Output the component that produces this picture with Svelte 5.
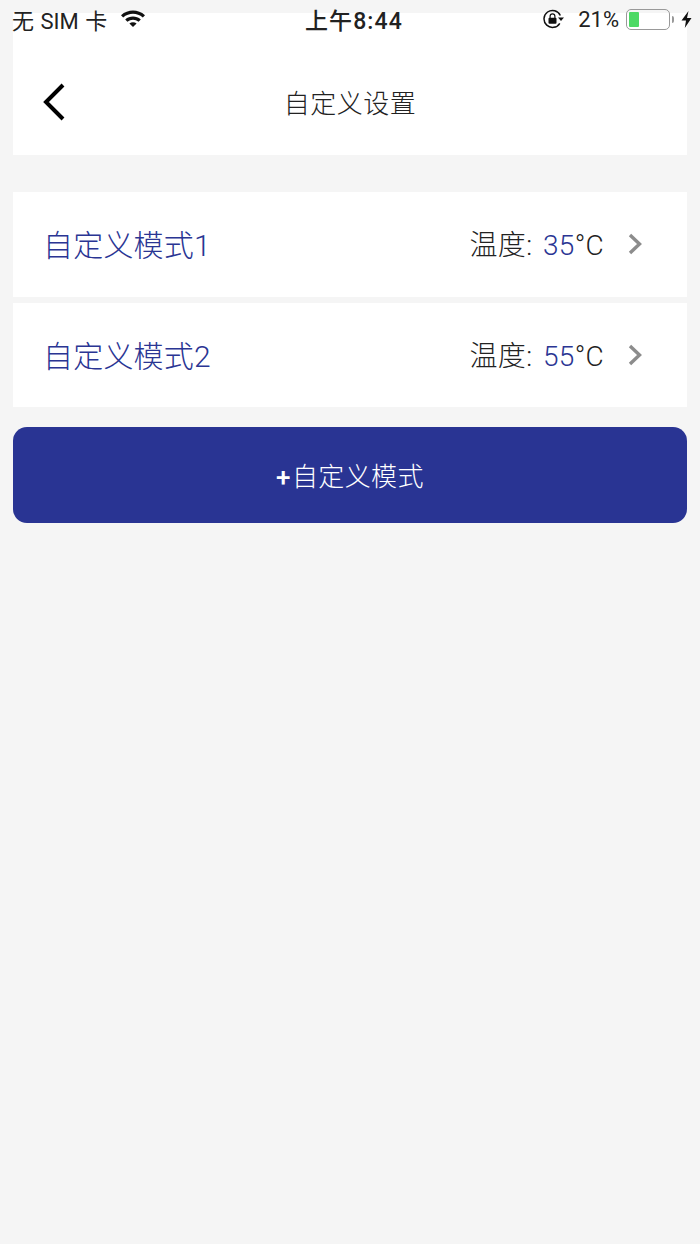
<script>
  const modes = [
    { name: "自定义模式1", temp: 35 },
    { name: "自定义模式2", temp: 55 }
  ];
</script>

<div class="page">
  <div class="status">
    <div class="status_left">
      <span>无 SIM 卡</span>
      <svg class="wifi" width="26" height="18" viewBox="0 0 26 18">
        <path d="M1 6.2 C8 0 18 0 25 6.2 L22.8 8.6 C17 3.6 9 3.6 3.2 8.6 Z" fill="#111" />
        <path d="M5.2 10.4 C9.8 6.6 16.2 6.6 20.8 10.4 L18.6 12.8 C15.2 10 10.8 10 7.4 12.8 Z" fill="#111" />
        <path d="M9.4 14.4 C11.6 12.8 14.4 12.8 16.6 14.4 L13 18 Z" fill="#111" />
      </svg>
    </div>
    <div class="status_time">上午8:44</div>
    <div class="status_right">
      <svg class="lock" width="22" height="20" viewBox="0 0 22 20">
        <path d="M17.3 6.5 A8.5 8.5 0 1 0 16.8 14.3" fill="none" stroke="#111" stroke-width="1.5" />
        <path d="M15 8.5 L21 8.5 L18 12 Z" fill="#111" />
        <rect x="5.5" y="8.8" width="8" height="6" rx="1" fill="#111" />
        <path d="M7.1 9 V7.2 a2.4 2.4 0 0 1 4.8 0 V9" fill="none" stroke="#111" stroke-width="1.2" />
      </svg>
      <span class="percent">21%</span>
      <div class="battery"><div class="battery_fill"></div></div>
      <div class="battery_tip"></div>
      <svg class="bolt" width="11" height="17" viewBox="0 0 11 17">
        <path d="M7.5 0 L0.5 9.5 H5 L3.8 17 L10.5 7 H6 Z" fill="#111" />
      </svg>
    </div>
  </div>

  <header class="header">
    <svg class="back" width="26" height="40" viewBox="0 0 26 40">
      <path d="M22 3 L5 20 L22 37" fill="none" stroke="#000" stroke-width="4" />
    </svg>
    <h1>自定义设置</h1>
  </header>

  <div class="list">
    {#each modes as m}
      <div class="row">
        <span class="name">{m.name}</span>
        <div class="right">
          <span class="temp">温度: <span class="num">{m.temp}</span>°C</span>
          <svg class="chevron" width="16" height="24" viewBox="0 0 16 24">
            <path d="M3 3 L12.5 12 L3 21" fill="none" stroke="#8c8c8c" stroke-width="3.4" />
          </svg>
        </div>
      </div>
    {/each}
  </div>

  <button class="add"><span class="plus">+</span>自定义模式</button>
</div>

<style>
  :global(body) {
    margin: 0;
    background: #f5f5f5;
  }
  .page {
    position: relative;
    box-sizing: border-box;
    height: 1244px;
    padding: 13px;
    background: #f5f5f5;
    font-family: Roboto, "Noto Sans CJK SC", sans-serif;
    font-weight: 300;
    color: #222;
  }
  .status {
    position: absolute;
    z-index: 1;
    top: 0;
    left: 12px;
    right: 8px;
    height: 38px;
    display: flex;
    align-items: center;
    justify-content: space-between;
    font-size: 22px;
    font-weight: 400;
    color: #222;
  }
  .status_left {
    display: flex;
    align-items: center;
    gap: 13px;
    word-spacing: 1px;
  }
  .wifi {
    margin-top: -3px;
  }
  .status_time {
    position: absolute;
    left: 293px;
    font-size: 23px;
    font-weight: 500;
    letter-spacing: 1.1px;
  }
  .status_right {
    display: flex;
    align-items: center;
  }
  .lock {
    margin-right: 13px;
  }
  .percent {
    margin-right: 7px;
  }
  .battery {
    box-sizing: border-box;
    width: 44px;
    height: 21px;
    padding: 2px;
    border: 1.5px solid #999;
    border-radius: 5px;
  }
  .battery_fill {
    width: 10px;
    height: 100%;
    background: #4cd964;
    border-radius: 1px;
  }
  .battery_tip {
    width: 2px;
    height: 7px;
    margin-left: 2px;
    margin-right: 7px;
    background: #999;
    border-radius: 0 2px 2px 0;
  }
  .header {
    position: relative;
    box-sizing: border-box;
    height: 142px;
    padding-top: 34px;
    display: flex;
    align-items: center;
    justify-content: center;
    background: #fff;
  }
  .back {
    position: absolute;
    left: 28px;
    top: 69px;
  }
  h1 {
    margin: 0;
    font-size: 26px;
    font-weight: 300;
    letter-spacing: 0.5px;
    color: #222;
  }
  .list {
    display: flex;
    flex-direction: column;
    gap: 6px;
    margin-top: 37px;
  }
  .row {
    box-sizing: border-box;
    height: 104.5px;
    display: flex;
    align-items: center;
    justify-content: space-between;
    padding: 0 44px 2px 30px;
    background: #fff;
  }
  .name {
    font-size: 30px;
    letter-spacing: 0.2px;
    color: #2a3593;
  }
  .right {
    display: flex;
    align-items: center;
    gap: 23px;
  }
  .temp {
    font-size: 28px;
    word-spacing: 3.5px;
    letter-spacing: 0.3px;
    color: #222;
  }
  .num {
    color: #2a3593;
  }
  .chevron {
    margin-top: 2px;
  }
  .add {
    display: block;
    width: 100%;
    height: 96px;
    margin-top: 20px;
    padding: 0 0 2px 3px;
    border: none;
    border-radius: 14px;
    background: #293493;
    color: #fff;
    font-family: inherit;
    font-weight: 300;
    font-size: 26px;
    letter-spacing: 0.4px;
  }
  .plus {
    font-weight: 500;
    margin-left: -3px;
    margin-right: 1px;
  }
</style>
